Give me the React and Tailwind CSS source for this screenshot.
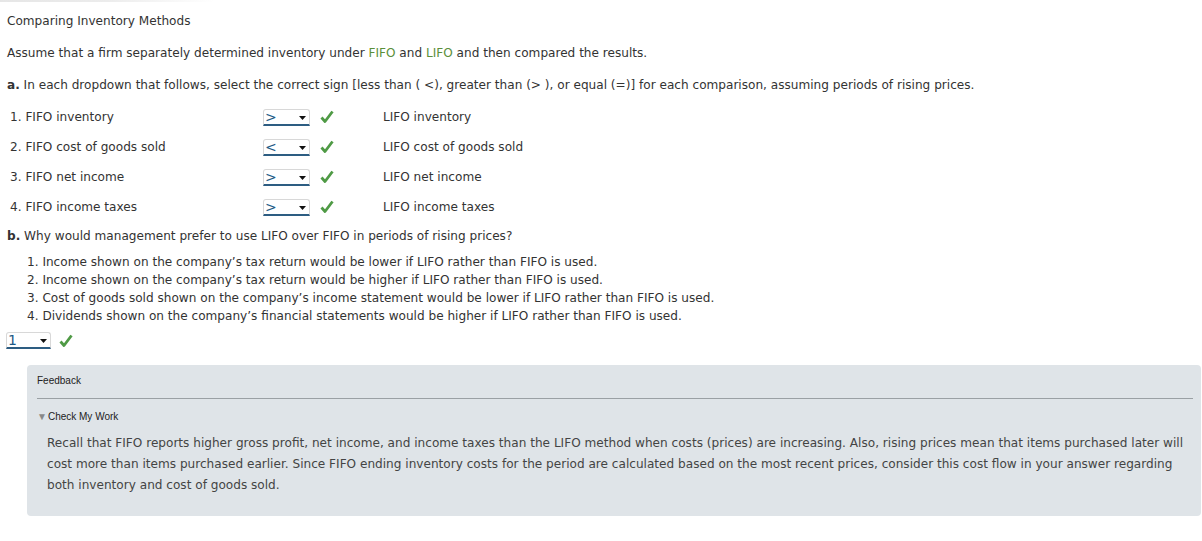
import React from "react";

const Check = () => (
  <svg width="14" height="14" viewBox="0 0 14 14" className="shrink-0">
    <path d="M1.5 7.5 L5 11.5 L12.5 1.5" fill="none" stroke="#4f9a45" strokeWidth="2.8" strokeLinejoin="round" />
  </svg>
);

const Select = ({ value, w = "w-[47px]" }) => (
  <div className={`relative h-[17px] ${w} rounded-t-[3px] border border-[#d8d8d8] border-b-2 border-b-[#2d5d82] bg-white flex items-center`}>
    <span className="pl-[1px] text-[14px] leading-none text-[#1d5a86]">{value}</span>
    <svg width="7" height="4" viewBox="0 0 7 4" className="absolute right-[3px] top-[6px]">
      <path d="M0 0 H7 L3.5 4 Z" fill="#111" />
    </svg>
  </div>
);

const rows = [
  ["1. FIFO inventory", ">", "LIFO inventory"],
  ["2. FIFO cost of goods sold", "<", "LIFO cost of goods sold"],
  ["3. FIFO net income", ">", "LIFO net income"],
  ["4. FIFO income taxes", ">", "LIFO income taxes"],
];

export default function App() {
  return (
    <div className="relative w-[1202px] h-[541px] bg-white text-[#333] text-[12.1px] overflow-hidden" style={{ fontFamily: '"DejaVu Sans", Verdana, sans-serif' }}>
      <div className="h-[2px] w-[215px] bg-gradient-to-r from-[#e6e6e6] via-[#ececec] to-transparent" />
      <div className="pl-[7px] pt-[11px] leading-[17px]">Comparing Inventory Methods</div>
      <div className="pl-[7px] mt-[15px] leading-[17px]">
        Assume that a firm separately determined inventory under <span className="text-[#5a8f3a]">FIFO</span> and <span className="text-[#5a8f3a]">LIFO</span> and then compared the results.
      </div>
      <div className="pl-[7px] mt-[15px] leading-[17px]">
        <b>a.</b> In each dropdown that follows, select the correct sign [less than ( &lt;), greater than (&gt; ), or equal (=)] for each comparison, assuming periods of rising prices.
      </div>
      <div className="mt-[8px] flex flex-col">
        {rows.map(([l, v, r]) => (
          <div key={l} className="flex items-center h-[30px]">
            <div className="pl-[10px] w-[263px]">{l}</div>
            <Select value={v} />
            <div className="ml-[10px]"><Check /></div>
            <div className="ml-[49px]">{r}</div>
          </div>
        ))}
      </div>
      <div className="pl-[7px] mt-[6px] leading-[17px]">
        <b>b.</b> Why would management prefer to use LIFO over FIFO in periods of rising prices?
      </div>
      <div className="pl-[27px] mt-[8px] flex flex-col leading-[18px]">
        <div>1. Income shown on the company’s tax return would be lower if LIFO rather than FIFO is used.</div>
        <div>2. Income shown on the company’s tax return would be higher if LIFO rather than FIFO is used.</div>
        <div>3. Cost of goods sold shown on the company’s income statement would be lower if LIFO rather than FIFO is used.</div>
        <div>4. Dividends shown on the company’s financial statements would be higher if LIFO rather than FIFO is used.</div>
      </div>
      <div className="pl-[6px] mt-[7px] flex items-center gap-[8px]">
        <Select value="1" w="w-[45px]" />
        <Check />
      </div>
      <div className="ml-[27px] mt-[16px] w-[1174px] h-[151px] rounded-[4px] bg-[#dfe4e8] px-[10px] pt-[10px]">
        <div className="text-[10px] leading-[12px] text-[#222]" style={{ fontFamily: '"Liberation Sans", Arial, sans-serif' }}>Feedback</div>
        <div className="mt-[11px] h-px w-[1156px] bg-[#9aa0a4]" />
        <div className="mt-[12px] flex items-center text-[10px] leading-[12px] text-[#222]" style={{ fontFamily: '"Liberation Sans", Arial, sans-serif' }}>
          <span className="text-[10px] text-[#888] mr-[1px]">▼</span>Check My Work
        </div>
        <div className="pl-[10px] mt-[10px] leading-[21px] text-[#444] w-[1150px]">
          Recall that FIFO reports higher gross profit, net income, and income taxes than the LIFO method when costs (prices) are increasing. Also, rising prices mean that items purchased later will cost more than items purchased earlier. Since FIFO ending inventory costs for the period are calculated based on the most recent prices, consider this cost flow in your answer regarding both inventory and cost of goods sold.
        </div>
      </div>
    </div>
  );
}
